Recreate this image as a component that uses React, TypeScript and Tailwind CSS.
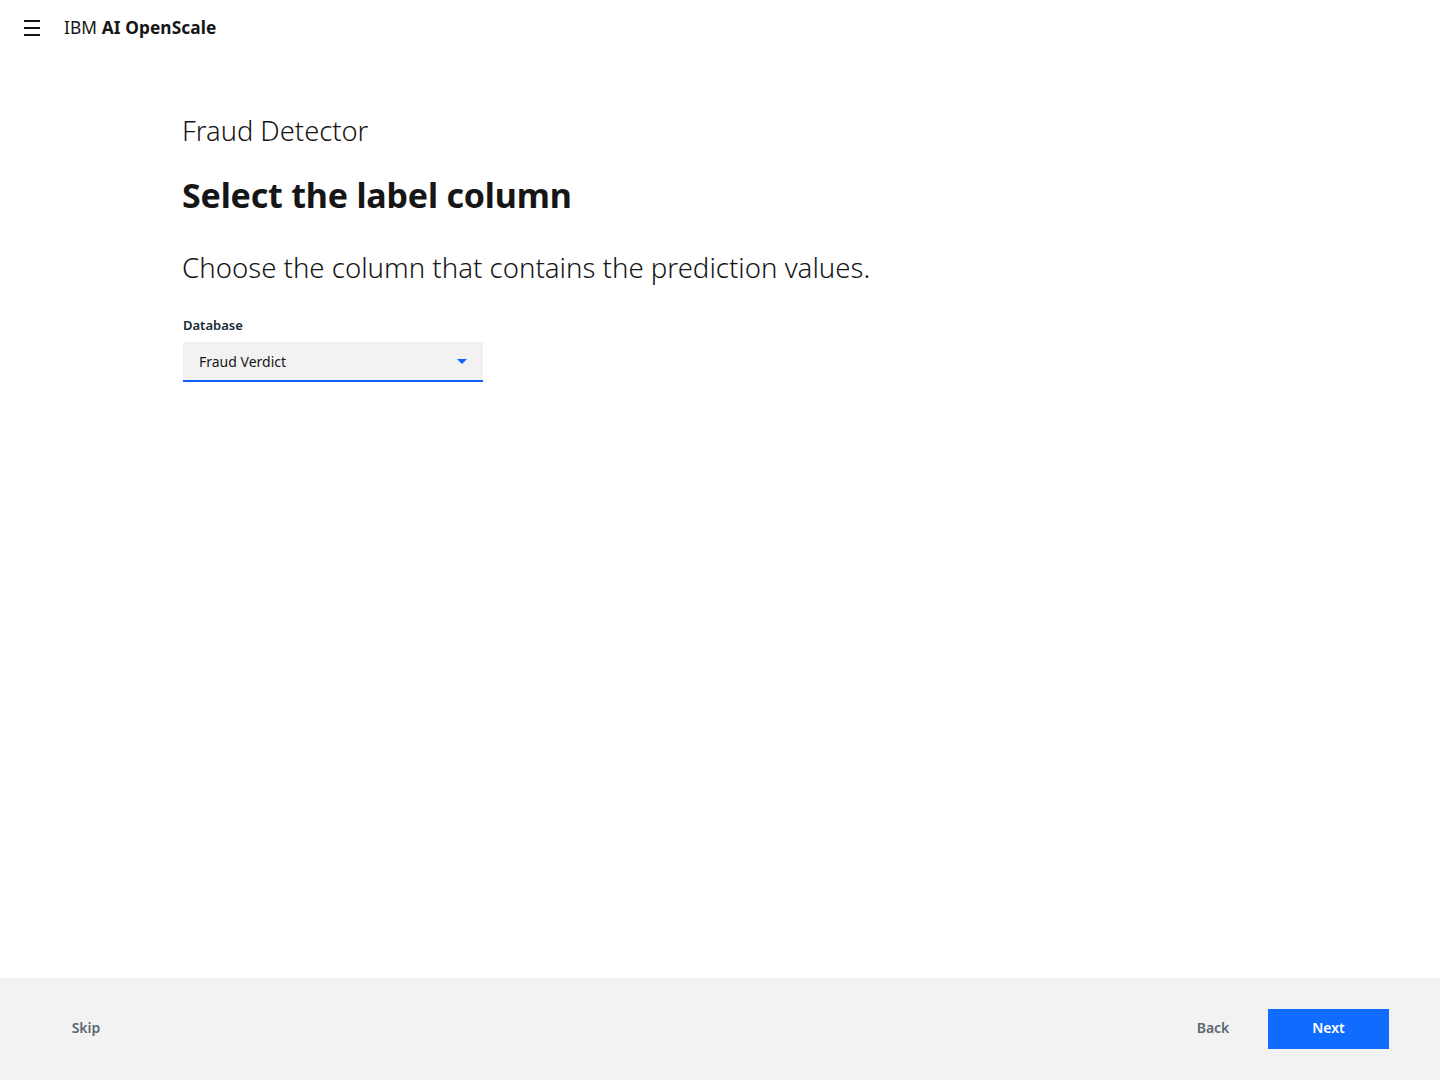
import React from 'react';

const font = { fontFamily: '"Noto Sans", "Liberation Sans", sans-serif' };

const App: React.FC = () => {
  return (
    <div className="flex flex-col h-[1080px] w-full bg-white text-[#161616]" style={font}>
      {/* Header */}
      <header className="h-14 flex items-center">
        <button className="w-16 h-14 flex items-center justify-center">
          <svg width="16" height="16" viewBox="0 0 16 16" fill="none" stroke="#161616" strokeWidth="2">
            <path d="M0 1h16M0 8h16M0 15h16" />
          </svg>
        </button>
        <span className="text-[17.3px] tracking-[0.1px]">
          IBM <span className="font-bold">AI OpenScale</span>
        </span>
      </header>

      {/* Content */}
      <main className="flex-1 pl-[182px] pt-[57px]">
        <h2 className="text-[27.3px] font-light leading-9">Fraud Detector</h2>
        <h1 className="mt-[26px] text-[34px] font-bold leading-10 tracking-[-0.2px]">Select the label column</h1>
        <p className="mt-[34px] text-[27.6px] font-light leading-9">
          Choose the column that contains the prediction values.
        </p>

        <div className="mt-[32px] w-[301px] pl-px">
          <label className="block text-[13px] font-semibold text-[#152935] leading-4 mb-[9px]">Database</label>
          <div className="h-10 bg-[#f2f2f2] border-b-2 border-[#0f62fe] flex items-center justify-between pl-4 pr-4">
            <span className="text-[14px] text-[#161616]">Fraud Verdict</span>
            <svg width="10" height="5" viewBox="0 0 10 5">
              <path d="M0 0h10L5 5z" fill="#0f62fe" />
            </svg>
          </div>
        </div>
      </main>

      {/* Footer */}
      <footer className="h-[102px] bg-[#f2f2f2] flex items-center justify-between px-[51px]">
        <button className="w-[70px] h-10 pb-1 text-[14px] font-semibold text-[#5a6872]">Skip</button>
        <div className="flex items-center gap-[20px]">
          <button className="w-[70px] h-10 pb-1 text-[14px] font-semibold text-[#5a6872]">Back</button>
          <button className="w-[121px] h-10 pb-1 bg-[#0f6cfe] text-white text-[14px] font-semibold">Next</button>
        </div>
      </footer>
    </div>
  );
};

export default App;
